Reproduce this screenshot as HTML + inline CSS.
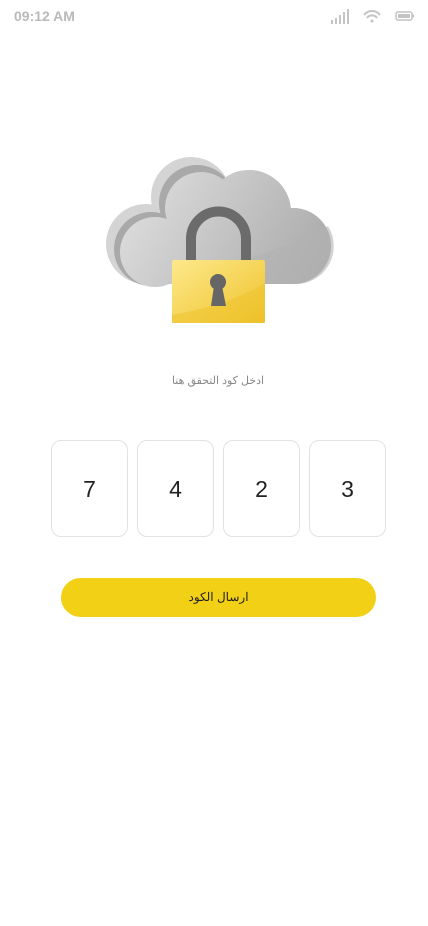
<!DOCTYPE html>
<html><head><meta charset="utf-8"><style>
body{margin:0;width:428px;height:926px;background:#fff;position:relative;overflow:hidden;font-family:"Liberation Sans","Noto Sans CJK SC",sans-serif}
.t{position:absolute;left:14px;top:8px;font-size:14px;font-weight:bold;color:#b9b9b9}
.box{position:absolute;top:440px;width:75px;height:95px;border:1px solid #e2e2e2;border-radius:10px;font-size:23px;color:#222;text-align:center;line-height:97px}
.btn{position:absolute;left:61px;top:578px;width:315px;height:39px;border-radius:20px;background:#f2d016;text-align:center;line-height:39px;font-size:12px;color:#222}
.lbl{position:absolute;left:0;width:436px;top:374px;text-align:center;font-size:11px;color:#888}
</style></head><body>
<div class="t">09:12 AM</div>
<svg style="position:absolute;left:330px;top:8px" width="90" height="18">
<g fill="#c4c4c4"><rect x="1" y="12" width="2" height="4"/><rect x="5" y="10" width="2" height="6"/><rect x="9" y="7" width="2" height="9"/><rect x="13" y="4" width="2" height="12"/><rect x="17" y="1" width="2" height="15"/></g>
<path d="M34 7a10 10 0 0 1 16 0M37 10a6 6 0 0 1 10 0" stroke="#c4c4c4" stroke-width="2" fill="none"/><circle cx="42" cy="13" r="1.5" fill="#c4c4c4"/>
<rect x="66" y="4" width="16" height="8" rx="2" fill="none" stroke="#c4c4c4" stroke-width="1.5"/><rect x="68" y="6" width="12" height="4" fill="#c4c4c4"/><rect x="82.5" y="6.5" width="1.5" height="3" fill="#c4c4c4"/>
</svg>
<svg style="position:absolute;left:0;top:0" width="428" height="340">
<defs><linearGradient id="c" gradientUnits="userSpaceOnUse" x1="120" y1="170" x2="320" y2="290"><stop offset="0" stop-color="#e2e2e2"/><stop offset="1" stop-color="#a8a8a8"/></linearGradient>
<linearGradient id="y" x1="0" y1="0" x2="1" y2="1"><stop offset="0" stop-color="#fde98c"/><stop offset="1" stop-color="#eec22a"/></linearGradient></defs>
<g fill="#d4d4d4"><circle cx="146" cy="244" r="40"/><circle cx="191" cy="197" r="40"/><circle cx="249" cy="212" r="42"/><circle cx="293" cy="246" r="38"/><rect x="146" y="230" width="147" height="54"/></g>
<g fill="#a9a9a9"><circle cx="151" cy="249" r="37"/><circle cx="197" cy="203" r="38"/></g>
<g fill="url(#c)"><circle cx="155" cy="252" r="35"/><circle cx="201" cy="208" r="36"/><circle cx="249" cy="212" r="42"/><circle cx="293" cy="246" r="38"/><rect x="155" y="240" width="138" height="44"/></g>
<path d="M180 270Q260 262 328 226A38 38 0 0 1 293 284H180Z" fill="#b3b3b3" opacity=".6"/>
<path d="M191 262V239a27 27 0 0 1 55 0V262" fill="none" stroke="#6b6b6b" stroke-width="10"/>
<rect x="172" y="260" width="93" height="63" rx="2" fill="url(#y)"/>
<path d="M172 315Q230 305 265 283V323H172Z" fill="#eec22a" opacity=".5"/>
<circle cx="218" cy="282" r="8" fill="#666"/><path d="M214 286L211 306H226L222 286Z" fill="#666"/>
</svg>
<div class="lbl">ادخل كود التحقق هنا</div>
<div class="box" style="left:51px">7</div>
<div class="box" style="left:137px">4</div>
<div class="box" style="left:223px">2</div>
<div class="box" style="left:309px">3</div>
<div class="btn">ارسال الكود</div>
</body></html>
